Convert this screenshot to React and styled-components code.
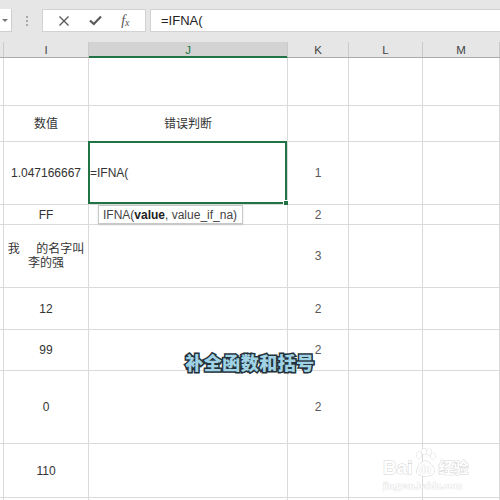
import styled, { createGlobalStyle } from "styled-components";

const GlobalStyle = createGlobalStyle`
  html, body {
    margin: 0;
    padding: 0;
    background: #fff;
    overflow: hidden;
  }
  body {
    font-family: "Liberation Sans", "Noto Sans CJK SC", sans-serif;
  }
`;

const COLS = "4px 85px 199px 61px 74px 77px";

const Page = styled.div`
  position: relative;
  width: 500px;
  height: 500px;
  overflow: hidden;
  display: flex;
  flex-direction: column;
`;

const FormulaBar = styled.div`
  flex-shrink: 0;
  height: 42px;
  background: #e6e6e6;
  display: flex;
  align-items: flex-start;
  padding-top: 9px;
  box-sizing: border-box;
`;

const NameBox = styled.div`
  width: 12px;
  height: 23px;
  background: #fff;
  border-right: 1px solid #cfcfcf;
  border-bottom: 1px solid #cfcfcf;
  box-sizing: border-box;
  display: flex;
  align-items: center;
  justify-content: center;
`;

const Arrow = styled.span`
  width: 0;
  height: 0;
  border-left: 3px solid transparent;
  border-right: 3px solid transparent;
  border-top: 3px solid #777;
  margin-left: -2px;
`;

const Grip = styled.div`
  width: 30px;
  height: 23px;
  display: flex;
  flex-direction: column;
  align-items: center;
  justify-content: center;
  gap: 2px;
  span {
    width: 2px;
    height: 2px;
    background: #a8a8a8;
  }
`;

const ButtonBox = styled.div`
  width: 104px;
  height: 23px;
  background: #fff;
  border: 1px solid #d2d2d2;
  box-sizing: border-box;
  display: flex;
  align-items: center;
  justify-content: space-around;
  padding: 0 6px;
`;

const Fx = styled.span`
  font-family: "Liberation Serif", "DejaVu Serif", serif;
  font-style: italic;
  font-size: 14px;
  color: #555;
  sub {
    font-size: 10px;
    vertical-align: -1px;
  }
`;

const Input = styled.div`
  flex: 1;
  height: 23px;
  margin-left: 4px;
  background: #fff;
  border: 1px solid #d2d2d2;
  border-right: none;
  box-sizing: border-box;
  font-size: 13px;
  color: #222;
  display: flex;
  align-items: center;
  padding-left: 10px;
`;

const HeaderRow = styled.div`
  flex-shrink: 0;
  display: grid;
  grid-template-columns: ${COLS};
  height: 15px;
  background: #e6e6e6;
  border-bottom: 1px solid #ababab;
`;

const HeaderCell = styled.div`
  border-right: 1px solid #cacaca;
  font-size: 11.5px;
  color: ${(p) => (p.$active ? "#217346" : "#444")};
  background: ${(p) => (p.$active ? "#d3d3d3" : "transparent")};
  box-shadow: ${(p) => (p.$active ? "inset 0 -1px 0 #217346" : "none")};
  border-bottom: ${(p) => (p.$active ? "1px solid #217346" : "none")};
  margin-bottom: ${(p) => (p.$active ? "-1px" : "0")};
  display: flex;
  align-items: center;
  justify-content: center;
`;

const Row = styled.div`
  display: grid;
  grid-template-columns: ${COLS};
  height: ${(p) => p.$h}px;
  flex-shrink: 0;
`;

const Cell = styled.div`
  position: relative;
  border-right: 1px solid #dadada;
  border-bottom: 1px solid #dadada;
  font-size: 12px;
  color: ${(p) => (p.$muted ? "#595959" : "#333")};
  display: flex;
  align-items: center;
  justify-content: ${(p) => (p.$left ? "flex-start" : "center")};
  text-align: center;
  line-height: 14px;
  padding-left: ${(p) => (p.$left ? "1px" : "0")};
  white-space: pre;
`;

const Selection = styled.div`
  position: absolute;
  top: -1px;
  left: -1px;
  right: 0;
  bottom: 0;
  border: 2px solid #217346;
  pointer-events: none;
  &::after {
    content: "";
    position: absolute;
    right: -4px;
    bottom: -4px;
    width: 4px;
    height: 4px;
    background: #217346;
    border: 1px solid #fff;
  }
`;

const Tooltip = styled.div`
  position: absolute;
  left: 9px;
  top: calc(100% + 1px);
  width: 145px;
  height: 19px;
  box-sizing: border-box;
  background: #fff;
  border: 1px solid #c8c8c8;
  box-shadow: 0 1px 2px rgba(0, 0, 0, 0.12);
  font-size: 12px;
  color: #444;
  display: flex;
  align-items: center;
  padding-left: 4px;
  z-index: 2;
  b {
    color: #222;
  }
`;

const Caption = styled.div`
  position: absolute;
  left: 0;
  right: 0;
  top: 349px;
  text-align: center;
  font-family: "Noto Sans CJK SC", sans-serif;
  font-weight: 900;
  font-size: 18px;
  letter-spacing: 0.5px;
  color: #9fd2e4;
  -webkit-text-stroke: 3px #26323a;
  paint-order: stroke fill;
  text-shadow: 1px 1px 0 #26323a;
`;

const Watermark = styled.div`
  position: absolute;
  left: 383px;
  top: 446px;
  display: flex;
  flex-direction: column;
  align-items: flex-start;
  color: #fff;
  -webkit-text-stroke: 1px #d6d6d6;
  paint-order: stroke fill;
  pointer-events: none;
`;

const MarkTop = styled.div`
  display: flex;
  align-items: flex-end;
  font-family: "Liberation Sans", "Noto Sans CJK SC", sans-serif;
  font-weight: 700;
  font-size: 19px;
  line-height: 20px;
  height: 32px;
  span {
    font-size: 15px;
    margin-left: 2px;
  }
`;

const MarkSub = styled.div`
  font-size: 9px;
  font-weight: 700;
  margin-top: 3px;
  -webkit-text-stroke: 0.6px #d6d6d6;
`;

const Paw = styled.svg`
  margin: 0 1px 0 1px;
`;

const rows = [
  { h: 48 },
  { h: 36, i: "数值", j: "错误判断" },
  { h: 63, i: "1.047166667", j: "=IFNA(", k: "1", selected: true },
  { h: 20, i: "FF", k: "2" },
  { h: 63, i: "我     的名字叫\n李的强", k: "3" },
  { h: 42, i: "12", k: "2" },
  { h: 41, i: "99", k: "2" },
  { h: 73, i: "0", k: "2" },
  { h: 54, i: "110" },
  { h: 10 },
];

const heads = ["", "I", "J", "K", "L", "M"];

export default function App() {
  return (
    <Page>
      <GlobalStyle />
      <FormulaBar>
        <NameBox>
          <Arrow />
        </NameBox>
        <Grip>
          <span />
          <span />
          <span />
        </Grip>
        <ButtonBox>
          <svg width="12" height="12" viewBox="0 0 12 12">
            <path d="M1.5 1.5 L10.5 10.5 M10.5 1.5 L1.5 10.5" stroke="#5a5a5a" strokeWidth="1.4" />
          </svg>
          <svg width="13" height="11" viewBox="0 0 13 11">
            <path d="M1 5.5 L4.8 9 L12 1.5" stroke="#5a5a5a" strokeWidth="2.2" fill="none" />
          </svg>
          <Fx>
            f<sub>x</sub>
          </Fx>
        </ButtonBox>
        <Input>=IFNA(</Input>
      </FormulaBar>

      <HeaderRow>
        {heads.map((h, n) => (
          <HeaderCell key={n} $active={h === "J"}>
            {h}
          </HeaderCell>
        ))}
      </HeaderRow>

      {rows.map((r, n) => (
        <Row key={n} $h={r.h}>
          <Cell />
          <Cell>{r.i}</Cell>
          <Cell $left={r.selected}>
            {r.selected ? "=IFNA(" : r.j}
            {r.selected && (
              <>
                <Selection />
                <Tooltip>
                  IFNA(<b>value</b>, value_if_na)
                </Tooltip>
              </>
            )}
          </Cell>
          <Cell $muted>{r.k}</Cell>
          <Cell />
          <Cell />
        </Row>
      ))}

      <Caption>补全函数和括号</Caption>

      <Watermark>
        <MarkTop>
          Bai
          <Paw width="22" height="30" viewBox="0 0 22 30">
            <g fill="#fff" stroke="#d6d6d6" strokeWidth="1">
              <ellipse cx="5" cy="7" rx="2.6" ry="3.2" />
              <ellipse cx="10" cy="3.5" rx="2.6" ry="3" />
              <ellipse cx="15" cy="4" rx="2.6" ry="3" />
              <ellipse cx="19" cy="8" rx="2.4" ry="3" />
              <path d="M3 25 C2 18 8 13 11 13 C15 13 21 18 20 25 C19 29 4 29 3 25 Z" />
            </g>
            <text x="11" y="25" textAnchor="middle" fontSize="10" fontWeight="700" fill="#fff" stroke="#d6d6d6" strokeWidth="0.6" fontFamily="Liberation Sans, sans-serif">du</text>
          </Paw>
          <span>经验</span>
        </MarkTop>
        <MarkSub>jingyan.baidu.com</MarkSub>
      </Watermark>
    </Page>
  );
}
